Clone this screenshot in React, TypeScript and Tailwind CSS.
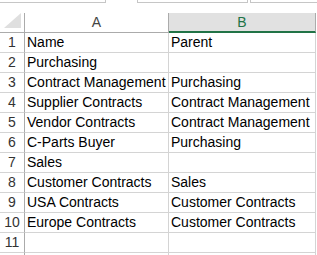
const rows: [string, string][] = [
  ["Name", "Parent"],
  ["Purchasing", ""],
  ["Contract Management", "Purchasing"],
  ["Supplier Contracts", "Contract Management"],
  ["Vendor Contracts", "Contract Management"],
  ["C-Parts Buyer", "Purchasing"],
  ["Sales", ""],
  ["Customer Contracts", "Sales"],
  ["USA Contracts", "Customer Contracts"],
  ["Europe Contracts", "Customer Contracts"],
  ["", ""],
];

const App = () => {
  return (
    <div className="w-[317px] h-[255px] overflow-hidden bg-white text-[14px] text-black font-['Liberation_Sans',Arial,sans-serif]">
      {/* toolbar edges */}
      <div className="flex h-[3px]">
        <div className="w-[106px] border-r border-b border-[#c6c6c6]" />
        <div className="ml-[31px] w-[111px] border-l border-r border-b border-[#c6c6c6]" />
        <div className="ml-[2px] flex-1 border-l border-b border-[#c6c6c6]" />
      </div>

      <div className="mt-[10px] grid grid-cols-[25px_144px_147px]">
        {/* header row */}
        <div className="relative h-[20px] border-r border-b border-[#ababab]">
          <div className="absolute right-[3px] bottom-[4px] w-0 h-0 border-l-[17px] border-l-transparent border-b-[15px] border-b-[#dfdfdf]" />
        </div>
        <div className="h-[20px] border-r border-b border-[#ababab] text-center leading-[19px] text-[#444]">A</div>
        <div className="h-[20px] border-r border-r-[#ababab] border-b-2 border-b-[#217346] bg-[#e1e1e1] text-center leading-[18px] text-[#217346]">B</div>

        {rows.map(([a, b], i) => (
          <div key={i} className="contents">
            <div className="h-[20px] border-r border-r-[#ababab] border-b border-b-[#d4d4d4] text-center leading-[19px] text-[#333]">
              {i + 1}
            </div>
            <div className="h-[20px] border-r border-b border-[#d4d4d4] pl-[2px] leading-[19px] whitespace-nowrap overflow-hidden">
              {a}
            </div>
            <div className="h-[20px] border-r border-b border-[#d4d4d4] pl-[2px] leading-[19px] whitespace-nowrap overflow-hidden">
              {b}
            </div>
          </div>
        ))}

        {/* partly visible row 12 */}
        <div className="h-[20px] border-r border-[#ababab]" />
        <div className="h-[20px] border-r border-[#d4d4d4]" />
        <div className="h-[20px] border-r border-[#d4d4d4]" />
      </div>
    </div>
  );
};

export default App;
